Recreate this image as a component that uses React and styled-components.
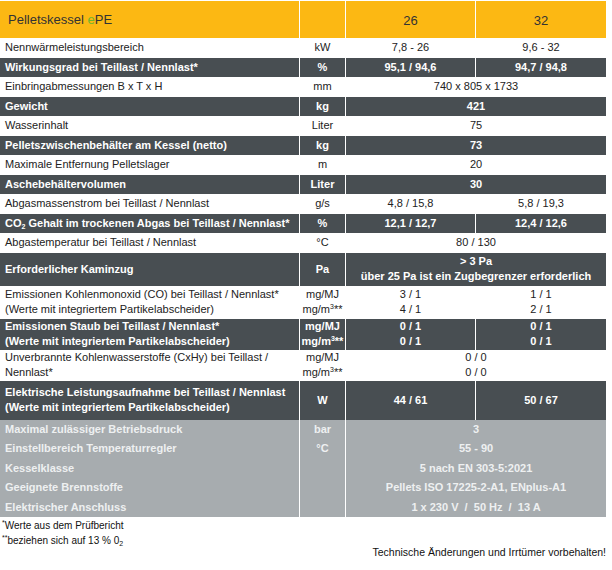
import styled, { createGlobalStyle } from "styled-components"

const GlobalStyle = createGlobalStyle`
    html, body {
        margin: 0;
        padding: 0;
        background: #ffffff;
    }
    body {
        font-family: "Liberation Sans", Arial, sans-serif;
        color: #222;
    }
`

const TONES = {
    head: { bg: "#fcb813", fg: "#333333", weight: 400 },
    white: { bg: "#ffffff", fg: "#222222", weight: 400 },
    dark: { bg: "#484e52", fg: "#ffffff", weight: 700 },
    gray: { bg: "#a7acaf", fg: "#eef0f1", weight: 700 },
}

const Page = styled.div`
    width: 612px;
    padding-top: 1px;
`

const Table = styled.div`
    width: 606px;
    display: flex;
    flex-direction: column;
`

const Row = styled.div`
    display: grid;
    grid-template-columns: 299px 45px 129px 130px;
    column-gap: 1px;
    height: ${p => p.$h || 19.5}px;
    background: #ffffff;
    font-size: 11px;
    line-height: 15px;
    font-weight: ${p => TONES[p.$tone].weight};
    color: ${p => TONES[p.$tone].fg};
`

const Cell = styled.div`
    background: ${p => TONES[p.$tone].bg};
    display: flex;
    flex-direction: column;
    justify-content: center;
    align-items: ${p => (p.$left ? "flex-start" : "center")};
    text-align: ${p => (p.$left ? "left" : "center")};
    padding-left: ${p => (p.$left ? "5px" : "0")};
    grid-column: ${p => (p.$span ? "span 2" : "auto")};
    white-space: nowrap;
`

const HeadLabel = styled(Cell)`
    font-size: 13px;
    padding-left: 8px;
`

const HeadValue = styled(Cell)`
    font-size: 13px;
    padding-top: 2px;
`

const Green = styled.span`
    color: #6fb52c;
`

const Sub = styled.sub`
    font-size: 7px;
    line-height: 0;
    vertical-align: -2px;
`

const Sup = styled.sup`
    font-size: 7px;
    line-height: 0;
    vertical-align: 4px;
`

const Notes = styled.div`
    font-size: 10px;
    line-height: 15px;
    color: #111;
    padding: 1px 0 0 2px;
    display: flex;
    flex-direction: column;
`

const Disclaimer = styled.div`
    font-size: 10.5px;
    color: #111;
    width: 606px;
    text-align: right;
    margin-top: -2px;
`

const m3 = <>mg/m<Sup>3</Sup>**</>

const rows = [
    { tone: "white", label: "Nennwärmeleistungsbereich", unit: "kW", a: "7,8 - 26", b: "9,6 - 32" },
    { tone: "dark", label: "Wirkungsgrad bei Teillast / Nennlast*", unit: "%", a: "95,1 / 94,6", b: "94,7 / 94,8" },
    { tone: "white", label: "Einbringabmessungen B x T x H", unit: "mm", all: "740 x 805 x 1733" },
    { tone: "dark", label: "Gewicht", unit: "kg", all: "421" },
    { tone: "white", label: "Wasserinhalt", unit: "Liter", all: "75" },
    { tone: "dark", label: "Pelletszwischenbehälter am Kessel (netto)", unit: "kg", all: "73" },
    { tone: "white", label: "Maximale Entfernung Pelletslager", unit: "m", all: "20" },
    { tone: "dark", label: "Aschebehältervolumen", unit: "Liter", all: "30" },
    { tone: "white", label: "Abgasmassenstrom bei Teillast / Nennlast", unit: "g/s", a: "4,8 / 15,8", b: "5,8 / 19,3" },
    { tone: "dark", label: <>CO<Sub>2</Sub> Gehalt im trockenen Abgas bei Teillast / Nennlast*</>, unit: "%", a: "12,1 / 12,7", b: "12,4 / 12,6" },
    { tone: "white", label: "Abgastemperatur bei Teillast / Nennlast", unit: "°C", all: "80 / 130" },
    { tone: "dark", h: 33, label: "Erforderlicher Kaminzug", unit: "Pa", all: ["> 3 Pa", "über 25 Pa ist ein Zugbegrenzer erforderlich"] },
    { tone: "white", h: 33, label: ["Emissionen Kohlenmonoxid (CO) bei Teillast / Nennlast*", "(Werte mit integriertem Partikelabscheider)"], unit: ["mg/MJ", m3], a: ["3 / 1", "4 / 1"], b: ["1 / 1", "2 / 1"] },
    { tone: "dark", h: 31, label: ["Emissionen Staub bei Teillast / Nennlast*", "(Werte mit integriertem Partikelabscheider)"], unit: ["mg/MJ", m3], a: ["0 / 1", "0 / 1"], b: ["0 / 1", "0 / 1"] },
    { tone: "white", h: 31, label: ["Unverbrannte Kohlenwasserstoffe (CxHy) bei Teillast /", "Nennlast*"], unit: ["mg/MJ", m3], all: ["0 / 0", "0 / 0"] },
    { tone: "dark", h: 39, label: ["Elektrische Leistungsaufnahme bei Teillast / Nennlast", "(Werte mit integriertem Partikelabscheider)"], unit: "W", a: "44 / 61", b: "50 / 67" },
    { tone: "gray", label: "Maximal zulässiger Betriebsdruck", unit: "bar", all: "3" },
    { tone: "gray", label: "Einstellbereich Temperaturregler", unit: "°C", all: "55 - 90" },
    { tone: "gray", label: "Kesselklasse", unit: "", all: "5 nach EN 303-5:2021" },
    { tone: "gray", label: "Geeignete Brennstoffe", unit: "", all: "Pellets ISO 17225-2-A1, ENplus-A1" },
    { tone: "gray", label: "Elektrischer Anschluss", unit: "", all: "1 x 230 V  /  50 Hz  /  13 A" },
]

const Lines = ({ value }) =>
    Array.isArray(value)
        ? value.map((line, i) => <div key={i}>{line}</div>)
        : <div style={{ whiteSpace: "pre" }}>{value}</div>

const App = () => {
    return (
        <Page>
            <GlobalStyle />
            <Table>
                <Row $tone="head" $h={37}>
                    <HeadLabel $tone="head" $left>
                        <div>Pelletskessel <Green>e</Green>PE</div>
                    </HeadLabel>
                    <Cell $tone="head" />
                    <HeadValue $tone="head">26</HeadValue>
                    <HeadValue $tone="head">32</HeadValue>
                </Row>
                {rows.map((row, index) => (
                    <Row key={index} $tone={row.tone} $h={row.h}>
                        <Cell $tone={row.tone} $left>
                            <Lines value={row.label} />
                        </Cell>
                        <Cell $tone={row.tone}>
                            <Lines value={row.unit} />
                        </Cell>
                        {row.all !== undefined ? (
                            <Cell $tone={row.tone} $span>
                                <Lines value={row.all} />
                            </Cell>
                        ) : (
                            <>
                                <Cell $tone={row.tone}>
                                    <Lines value={row.a} />
                                </Cell>
                                <Cell $tone={row.tone}>
                                    <Lines value={row.b} />
                                </Cell>
                            </>
                        )}
                    </Row>
                ))}
            </Table>
            <Notes>
                <div><Sup>*</Sup>Werte aus dem Prüfbericht</div>
                <div><Sup>**</Sup>beziehen sich auf 13 % 0<Sub>2</Sub></div>
            </Notes>
            <Disclaimer>Technische Änderungen und Irrtümer vorbehalten!</Disclaimer>
        </Page>
    )
}

export default App
